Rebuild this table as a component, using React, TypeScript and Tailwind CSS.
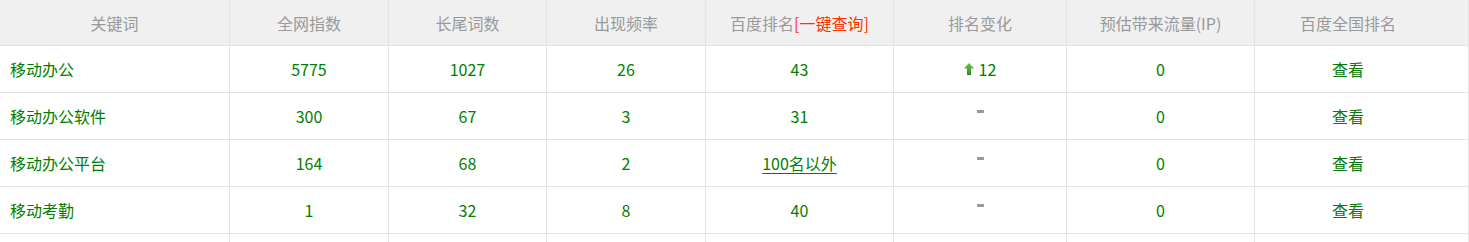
import React from 'react';

interface Row {
  keyword: string;
  index: string;
  longTail: string;
  freq: string;
  rank: string;
  rankLink?: boolean;
  change: number | null;
  ip: string;
}

const rows: Row[] = [
  { keyword: '移动办公', index: '5775', longTail: '1027', freq: '26', rank: '43', change: 12, ip: '0' },
  { keyword: '移动办公软件', index: '300', longTail: '67', freq: '3', rank: '31', change: null, ip: '0' },
  { keyword: '移动办公平台', index: '164', longTail: '68', freq: '2', rank: '100名以外', rankLink: true, change: null, ip: '0' },
  { keyword: '移动考勤', index: '1', longTail: '32', freq: '8', rank: '40', change: null, ip: '0' },
];

const grid = 'grid grid-cols-[230px_159px_158px_159px_188px_173px_188px_214px]';
const cell = 'border-r border-b border-[#e4e4e4] flex items-center justify-center';

const UpArrow = () => (
  <svg width="10" height="12" viewBox="0 0 10 12" className="mr-[5px]">
    <defs>
      <linearGradient id="ga" x1="0" y1="0" x2="0" y2="1">
        <stop offset="0" stopColor="#6cc644" />
        <stop offset="1" stopColor="#2e8b1e" />
      </linearGradient>
    </defs>
    <path d="M5 0 L10 5.5 L7 5.5 L7 12 L3 12 L3 5.5 L0 5.5 Z" fill="url(#ga)" />
  </svg>
);

const App: React.FC = () => {
  return (
    <div className="w-[1469px] h-[242px] overflow-hidden bg-white text-[16px] text-[#008000]" style={{ fontFamily: '"Noto Sans CJK SC", "Noto Sans", sans-serif' }}>
      <div className={`${grid} h-[46px] bg-[#f0f0f0] text-[#999]`}>
        <div className={cell}>关键词</div>
        <div className={cell}>全网指数</div>
        <div className={cell}>长尾词数</div>
        <div className={cell}>出现频率</div>
        <div className={cell}>
          百度排名<span className="text-[#ff3300]">[一键查询]</span>
        </div>
        <div className={cell}>排名变化</div>
        <div className={cell}>预估带来流量(IP)</div>
        <div className={`${cell} pr-[27px]`}>百度全国排名</div>
      </div>
      {rows.map((r) => (
        <div key={r.keyword} className={`${grid} h-[47px]`}>
          <div className={`${cell} !justify-start pl-[10px]`}>{r.keyword}</div>
          <div className={cell}>{r.index}</div>
          <div className={cell}>{r.longTail}</div>
          <div className={cell}>{r.freq}</div>
          <div className={cell}>
            {r.rankLink ? <a className="underline underline-offset-[3px]">{r.rank}</a> : r.rank}
          </div>
          <div className={cell}>
            {r.change !== null ? (
              <span className="flex items-center">
                <UpArrow />
                {r.change}
              </span>
            ) : (
              <span className="block w-[7px] h-[3px] bg-[#9a9a9a] mb-[10px]" />
            )}
          </div>
          <div className={cell}>{r.ip}</div>
          <div className={`${cell} pr-[27px] text-[#0a7a0a]`}>查看</div>
        </div>
      ))}
      <div className={`${grid} h-[47px]`}>
        {Array.from({ length: 8 }).map((_, i) => (
          <div key={i} className={cell} />
        ))}
      </div>
    </div>
  );
};

export default App;
